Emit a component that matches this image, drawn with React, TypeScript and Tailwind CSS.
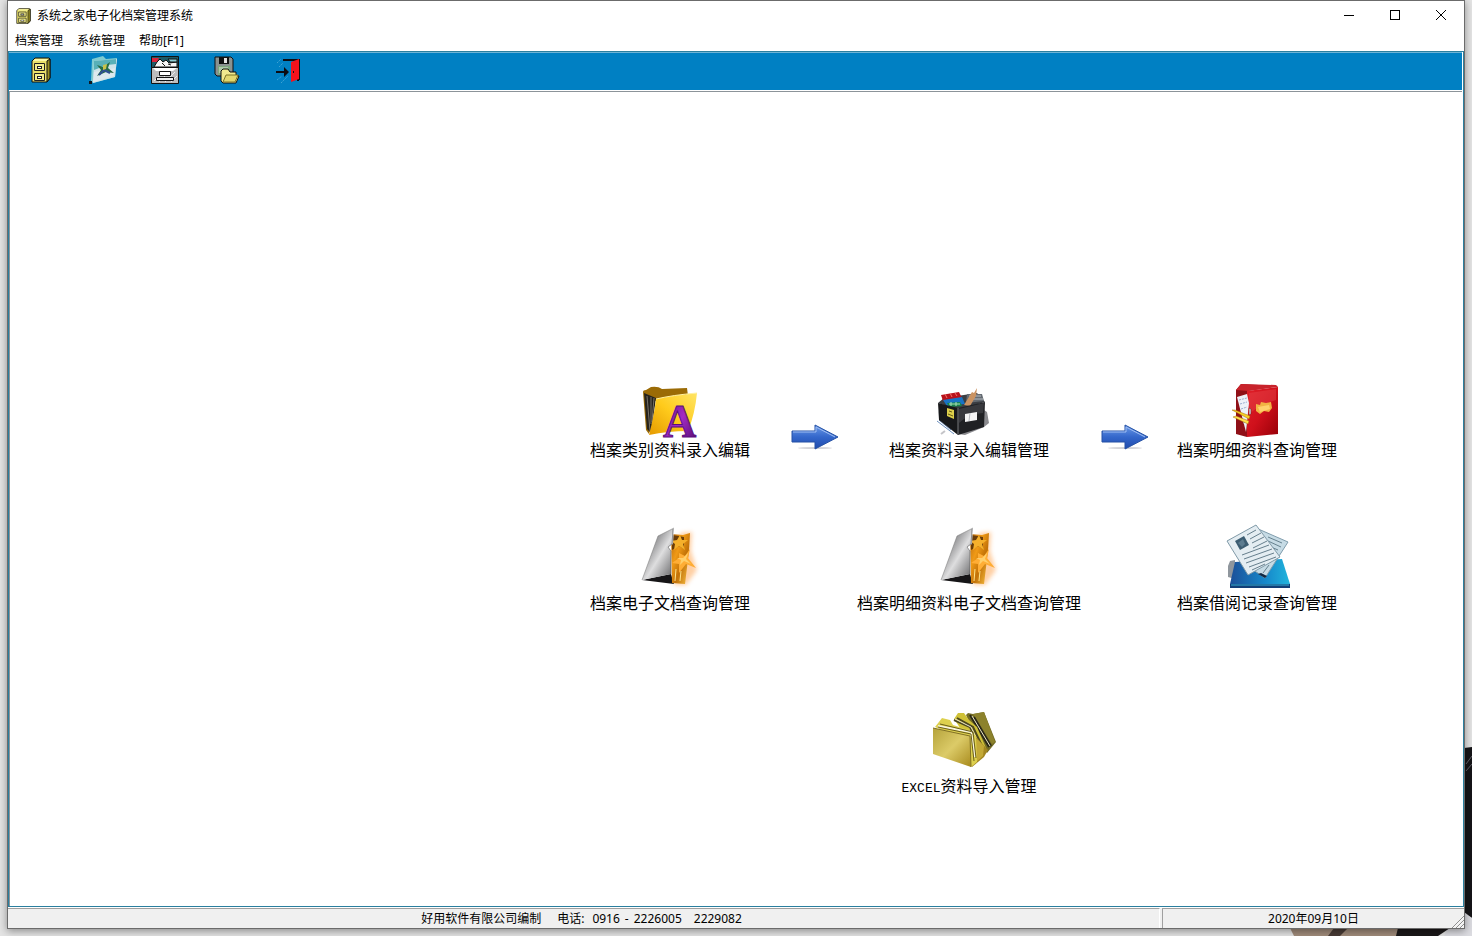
import React from "react";

const menus = ["档案管理", "系统管理", "帮助[F1]"];

const CabinetIcon = ({ className }: { className?: string }) => (
  <svg viewBox="0 0 20 26" preserveAspectRatio="none" className={className} aria-hidden="true">
    <path d="M1 4L4 1H18L19 2V21L16 25H1Z" fill="#e9e06a" stroke="#111" />
    <path d="M16 4L19 2V21L16 25Z" fill="#9a8f22" stroke="#111" />
    <path d="M2 4L4 2H17L15 4Z" fill="#fbf7a8" />
    <path d="M3.5 6.5H13.5V13.5H3.5ZM3.5 16.5H13.5V23.5H3.5Z" fill="#f4ee8a" stroke="#222" />
    <path d="M6 9H11V12H6ZM6 19H11V22H6Z" fill="#222" />
    <path d="M7 10H10V11H7ZM7 20H10V21H7Z" fill="#fff" />
  </svg>
);

const PictureIcon = () => (
  <svg viewBox="0 0 28 28" className="size-7" aria-hidden="true">
    <path d="M3 3L14 0L17 3L28 2L26 21L4 27L2 25Z" fill="#7fcbd0" />
    <path d="M5 5L28 3L26 21L4 27Z" fill="#cfe4ea" />
    <path d="M5 5L27 3V8L18 9L5 14Z" fill="#58b0b8" />
    <path d="M5 16L26 12L25 20L4 26Z" fill="#dfe9ee" />
    <path d="M8 9L14 11L21 6L19 12L25 17L17 16L8 20L12 14Z" fill="#276c45" />
    <path d="M10 19L15 14L21 17" stroke="#304f94" strokeWidth="2" fill="none" />
    <path d="M14 9L18 8L17 13L14 14Z" fill="#c9c24a" />
    <path d="M0 25H3V28H0Z" fill="#101820" />
  </svg>
);

const DrawerIcon = () => (
  <svg viewBox="0 0 28 28" className="size-7" aria-hidden="true">
    <path d="M0.5 0.5H27.5V12H0.5Z" fill="#1d5a66" stroke="#111" />
    <path d="M1 2H8L6 6H1Z" fill="#d8243c" />
    <path d="M3 11L6 6L9 3L12 6L15 4L18 7L26 6V11Z" fill="#f6f6f6" stroke="#111" />
    <path d="M17 3H26V6H19Z" fill="#8bcbd2" stroke="#111" />
    <path d="M11 7L14 10M17 8L20 9" stroke="#111" />
    <path d="M0.5 11.5H27.5V27.5H0.5Z" fill="#bdbdbd" stroke="#111" />
    <path d="M2 12H26L22 15H5Z" fill="#fff" />
    <path d="M3 25L13 15M8 26L18 16M14 26L24 16M20 26L26 20" stroke="#eee" />
    <path d="M8.500 15.500H19.500V19.500H8.500Z" fill="#fff" stroke="#111" />
    <path d="M5.500 21.500V24.500H22.500V21.500Z" fill="#eee" stroke="#111" />
  </svg>
);

const SaveIcon = () => (
  <svg viewBox="0 0 28 28" className="size-7" aria-hidden="true">
    <path d="M2 1H18L20 3V20H4L2 18Z" fill="#8a9290" stroke="#111" />
    <rect x="6" y="1" width="10" height="7" fill="#111" />
    <rect x="11" y="2" width="3" height="5" fill="#e6e6e6" />
    <rect x="5" y="10" width="12" height="9" fill="#7ea67d" />
    <path d="M6 12H15M6 14H13M6 16H10" stroke="#dcebd8" />
    <path d="M8 15L10 13H15L17 16H23V19L26 20L23 27H10L8 25Z" fill="#f0e98e" stroke="#111" />
    <path d="M10 26L13 19H25L22 26Z" fill="#e2d870" stroke="#7d7426" />
  </svg>
);

const ExitIcon = () => (
  <svg viewBox="0 0 28 28" className="size-7" aria-hidden="true">
    <path d="M2 7L6 3M4 11L8 7M2 24L7 20M6 27L13 20" stroke="#3fa3d4" strokeDasharray="2 1" />
    <path d="M8 3H24V25H22V5H8Z" fill="#0c0c12" />
    <path d="M16 6L24 3V23L16 26Z" fill="#f5121b" />
    <path d="M24 3V24L25 24V3Z" fill="#111" />
    <path d="M18 15H19V17H18Z" fill="#111" />
    <path d="M1 15H9V11L14 16L9 21V17H1Z" fill="#0c0c12" />
  </svg>
);

const tools = [
  { label: "档案类别", icon: <CabinetIcon className="h-[26px] w-5" /> },
  { label: "电子文档", icon: <PictureIcon /> },
  { label: "档案资料", icon: <DrawerIcon /> },
  { label: "数据备份", icon: <SaveIcon /> },
  { label: "退出系统", icon: <ExitIcon /> },
];

const FolderLetterIcon = () => (
  <svg viewBox="0 0 64 64" className="size-16 overflow-visible" aria-hidden="true">
    <defs>
      <linearGradient id="folderFront" x1="0" y1="1" x2="1" y2="0">
        <stop offset="0" stopColor="#e59a00" />
        <stop offset=".5" stopColor="#ffcb1c" />
        <stop offset="1" stopColor="#ffe566" />
      </linearGradient>
      <linearGradient id="letter" x1="0" y1="0" x2="1" y2="1">
        <stop offset="0" stopColor="#5c0d7c" />
        <stop offset=".5" stopColor="#a32bc4" />
        <stop offset="1" stopColor="#4b0868" />
      </linearGradient>
    </defs>
    <path d="M5 18Q5 16 8 16L13 13Q20 12 24 15L49 14L50 22L17 27L11 60L8 56Z" fill="#9b6b06" />
    <path d="M6 19L18 24L13 59L9 55Z" fill="#26231c" />
    <path d="M9 22L12 57M13 23L13 50M16 24L14 48" stroke="#777167" />
    <path d="M18 25Q35 21 59 19Q57 40 50 57Q30 57 11 61Q16 42 18 25Z" fill="url(#folderFront)" />
    <path d="M18 25Q35 21 59 19" stroke="#fff0a0" fill="none" />
    <text
      x="25"
      y="63"
      fontSize="46"
      fontWeight="700"
      fontFamily="Liberation Serif, serif"
      fill="url(#letter)"
      stroke="#5c0d7c"
    >
      A
    </text>
  </svg>
);

const FileBoxIcon = () => (
  <svg viewBox="0 0 64 64" className="size-16 overflow-visible" aria-hidden="true">
    <path d="M0 47L17 60M2 46L14 56" stroke="#6c8fbd" strokeWidth="1" />
    <path d="M4 60L8 57" stroke="#c4c4c8" strokeWidth="2" />
    <path d="M47 36L50 38L52 49L47 53L28 61L21 60Z" fill="#8b8b8f" />
    <path d="M1 29L7 24L40 19L48 28L21 36Z" fill="#3b3e43" />
    <path d="M30 20L45 20L47 27L29 29Z" fill="#656b72" />
    <path d="M32 22L44 22M33 25L46 25" stroke="#b7bdc1" />
    <path d="M4 21L22 18L25 24L6 27Z" fill="#b8121b" />
    <path d="M8 20L10 24M13 19L15 23M18 19L20 22" stroke="#f37067" />
    <path d="M6 26L25 23L28 30L10 32Z" fill="#1873c5" />
    <path d="M10 29L23 28L25 32L12 33Z" fill="#17834a" />
    <path d="M12 30H23M14 28V32M19 28V32" stroke="#a8dfba" />
    <path d="M35 18L37 19L40 14L39 22L33 32L27 31Z" fill="#ca9362" />
    <path d="M1 29L21 34V61L2 46Z" fill="#17181a" />
    <path d="M21 34L48 28L47 53L21 61Z" fill="#202124" />
    <path d="M22 35L47 29L46 39Q33 39 22 49Z" fill="#38393d" />
    <path d="M21 34V60" stroke="#76787b" />
    <path d="M10 34L17 36V45L10 42Z" fill="#ddcf4b" />
    <path d="M12 37L15 38M11 40L16 42" stroke="#655b16" />
    <path d="M28 40L40 38V46L28 48Z" fill="#f5f5f5" />
    <path d="M33 39L32 47" stroke="#b9bbc0" />
  </svg>
);

const RedCabinetIcon = () => (
  <svg viewBox="0 0 64 64" className="size-16 overflow-visible" aria-hidden="true">
    <defs>
      <linearGradient id="redDoor" x1="0" y1="0" x2="1" y2="1">
        <stop offset="0" stopColor="#e02029" />
        <stop offset=".5" stopColor="#cf101b" />
        <stop offset="1" stopColor="#970008" />
      </linearGradient>
    </defs>
    <path d="M11 16L16 10L53 12L22 17L22 63L11 60Z" fill="#8f1017" />
    <path d="M16 10L51 11L53 13L23 17L11 16Z" fill="#c8232b" />
    <path d="M22 17L53 13V60L22 63Z" fill="url(#redDoor)" />
    <path d="M24 19L51 15V26Q36 30 24 40Z" fill="#e84a50" opacity=".4" />
    <path d="M12 23L22 20L24 29L21 58Z" fill="#eef1f8" />
    <path d="M14 26L22 24M15 30L22 28M16 35L22 33M18 49L21 48" stroke="#9aaecf" strokeDasharray="2 1" />
    <path d="M7 36L10 36L25 42L24 45Z" fill="#f7cf24" stroke="#a66c0b" strokeWidth=".5" />
    <path d="M8 43L11 42L24 47L23 50Z" fill="#ffe04c" stroke="#a66c0b" strokeWidth=".5" />
    <path d="M24 34L26 35V40L24 41Z" fill="#d3d3d6" stroke="#6f1013" strokeWidth=".5" />
    <path d="M31 30L35 31L36 28L41 29L46 28L47 34L44 38L39 37L35 40L31 37Z" fill="#f2b243" />
    <path d="M33 33L44 31L45 35L35 38Z" fill="#ffd16c" />
  </svg>
);

const StarFolderIcon = () => (
  <svg viewBox="0 0 64 64" className="size-16 overflow-visible" aria-hidden="true">
    <defs>
      <linearGradient id="silver" x1="0" y1="0" x2="1" y2="1">
        <stop offset="0" stopColor="#555" />
        <stop offset=".3" stopColor="#8c8c8e" />
        <stop offset=".55" stopColor="#dededf" />
        <stop offset="1" stopColor="#58585a" />
      </linearGradient>
      <linearGradient id="gold" x1="0" y1="0" x2="1" y2="1">
        <stop offset="0" stopColor="#b5660c" />
        <stop offset=".35" stopColor="#f09a16" />
        <stop offset=".6" stopColor="#c27208" />
        <stop offset="1" stopColor="#ffc94a" />
      </linearGradient>
      <filter id="glow" x="-30%" y="-30%" width="160%" height="160%">
        <feGaussianBlur stdDeviation="2" />
      </filter>
    </defs>
    <path d="M42 6L54 5L53 24L59 43L48 58L36 58Z" fill="#ffb067" opacity=".6" filter="url(#glow)" />
    <path d="M4 53L33 47L36 57Z" fill="#161517" />
    <path d="M33 7L45 8L52 6L51 24L47 57L34 56Z" fill="url(#gold)" />
    <path d="M34 8L46 10L46 22L41 19L34 23Z" fill="#6a3c08" />
    <path d="M42 8L44 13L50 13L45 17L47 23L41 19L36 23L37 17L33 14L39 13Z" fill="#f5b02b" />
    <path d="M52 22L50 31L58 41L48 37L41 46L41 37L34 36L41 31L41 26L47 29Z" fill="#ffad35" />
    <path d="M50 26L48 32L53 37L46 34L42 38L43 33L39 31L45 31Z" fill="#ffcf6b" />
    <path d="M38 42L37 54M43 44L42 54" stroke="#ffe38a" strokeWidth="1" />
    <path d="M36 1L20 9L4 53L33 47L33 24L30 20L35 17Z" fill="url(#silver)" />
    <path d="M36 1L20 9L4 53" stroke="#777" strokeWidth=".5" fill="none" />
    <path d="M35 2L34 17L30 20L33 24V47" stroke="#444" strokeWidth=".5" fill="none" />
  </svg>
);

const PapersIcon = () => (
  <svg viewBox="0 0 64 64" className="size-16 overflow-visible" aria-hidden="true">
    <defs>
      <linearGradient id="blueTray" x1="0" y1="0" x2="1" y2="0">
        <stop offset="0" stopColor="#1b4f98" />
        <stop offset=".6" stopColor="#1689cb" />
        <stop offset="1" stopColor="#22b5dc" />
      </linearGradient>
    </defs>
    <path d="M3 39L5 34L10 33L10 52L3 50Z" fill="#8f969d" />
    <path d="M10 35L57 32L65 57H5Z" fill="url(#blueTray)" />
    <path d="M5 57H65V61H5Z" fill="#123f77" />
    <path d="M6 58H64" stroke="#35b2d8" />
    <path d="M31 1L63 15L40 51L21 38Z" fill="#c6dbe5" stroke="#7f9cac" />
    <path d="M43 10L57 16M43 14L56 20M46 20L53 23M45 36L49 30M38 46L44 38" stroke="#66818e" />
    <path d="M31 -2L2 14L23 48L55 30Z" fill="#e4edf2" stroke="#809aa8" />
    <path d="M10 14L19 9L24 18L15 23Z" fill="#3c5d72" />
    <path d="M13 16L18 12L20 17L17 20Z" fill="#5c7c90" />
    <path d="M22 8L31 3M25 12L36 6M27 16L39 10M28 21L42 14M17 28L44 18M19 32L47 22M21 36L49 26M24 40L51 30M27 43L40 37" stroke="#657e8c" />
    <path d="M36 46L42 49L40 51L33 47Z" fill="#122944" />
  </svg>
);

const FoldersIcon = () => (
  <svg viewBox="0 0 64 64" className="size-16 overflow-visible" aria-hidden="true">
    <defs>
      <linearGradient id="manila" x1="0" y1="0" x2="1" y2="1">
        <stop offset="0" stopColor="#b5a33b" />
        <stop offset=".5" stopColor="#dccb68" />
        <stop offset="1" stopColor="#a88a1c" />
      </linearGradient>
    </defs>
    <path d="M29 5L31 3L36 4L47 2L59 32L50 43L40 30Z" fill="#746d25" />
    <path d="M36 4L47 2L58 32L55 34Z" fill="#8c822c" />
    <path d="M33 5L52 37M37 7L54 36" stroke="#292717" strokeWidth="2" />
    <path d="M35 6L53 36" stroke="#e6e2c5" />
    <path d="M17 9L21 3L27 3L32 10L40 17L49 38L39 51L30 28Z" fill="#cfc137" />
    <path d="M17 10L33 17L41 34M20 8L36 17L46 38" stroke="#4c471d" strokeWidth="2" fill="none" />
    <path d="M18 9L34 17L44 38" stroke="#eee9cd" fill="none" />
    <path d="M35 23L41 29L51 40L47 47L35 57Z" fill="#a28620" />
    <path d="M38 27L47 36L46 46L36 55Z" fill="#c3a936" />
    <path d="M-2 17L5 8L13 10L16 15L32 20L39 26L40 52L34 57L28 30Z" fill="#ddd04e" />
    <path d="M1 16L34 22L38 47" stroke="#f7f4df" strokeWidth="2" fill="none" />
    <path d="M1 17L34 24L37 51M3 14L36 22L39 48" stroke="#6a5e1a" fill="none" />
    <path d="M-4 18L33 26L34 57L-4 44Z" fill="url(#manila)" />
    <path d="M-4 18L33 26L34 57" stroke="#827125" fill="none" />
  </svg>
);

const FlowArrow = () => (
  <div className="flex justify-center pt-12">
    <svg viewBox="0 0 48 28" className="h-7 w-12" aria-hidden="true">
      <defs>
        <linearGradient id="arrowBlue" x1="0" y1="0" x2="0" y2="1">
          <stop offset="0" stopColor="#6b9ae8" />
          <stop offset=".5" stopColor="#3467cb" />
          <stop offset="1" stopColor="#1f4aac" />
        </linearGradient>
      </defs>
      <ellipse cx="24" cy="26" rx="17" ry="1" fill="#d3d3d8" />
      <path d="M1 9H24V3L47 15L24 27V20H1Z" fill="url(#arrowBlue)" stroke="#2451a5" />
      <path d="M2 10H25V5L44 15" stroke="#9dbcf2" fill="none" />
    </svg>
  </div>
);

type LauncherProps = { icon: React.ReactNode; children: React.ReactNode };

const Launcher = ({ icon, children }: LauncherProps) => (
  <button type="button" className="flex flex-col items-center">
    {icon}
    <span className="whitespace-nowrap text-base leading-[22px]">{children}</span>
  </button>
);

const TitleBar = () => (
  <header className="flex h-[30px] items-center bg-white pl-2">
    <CabinetIcon className="h-4 w-[15px]" />
    <h1 className="flex-1 pl-[6px]">系统之家电子化档案管理系统</h1>
    <div className="flex h-7 self-start">
      <button type="button" aria-label="最小化" className="flex w-[46px] items-center justify-center">
        <svg viewBox="0 0 12 12" className="size-3" aria-hidden="true">
          <path d="M1 6.5H11" stroke="#000" />
        </svg>
      </button>
      <button type="button" aria-label="最大化" className="flex w-[46px] items-center justify-center">
        <svg viewBox="0 0 12 12" className="size-3" aria-hidden="true">
          <rect x="1.5" y="1.5" width="9" height="9" fill="none" stroke="#000" />
        </svg>
      </button>
      <button type="button" aria-label="关闭" className="flex w-[46px] items-center justify-center">
        <svg viewBox="0 0 12 12" className="size-3" aria-hidden="true">
          <path d="M1 1L11 11M11 1L1 11" stroke="#000" />
        </svg>
      </button>
    </div>
  </header>
);

const StatusBar = () => (
  <footer className="flex h-5 gap-[2px] bg-[#f0f0f0]">
    <div className="flex flex-1 items-center justify-center border-t border-r border-t-[#a0a0a0] border-r-white pr-1 whitespace-nowrap">
      <span>好用软件有限公司编制</span>
      <span className="ml-4">电话:</span>
      <span className="ml-2">0916</span>
      <span className="mx-[5px]">-</span>
      <span>2226005</span>
      <span className="ml-3">2229082</span>
    </div>
    <div className="relative flex w-[302px] items-center justify-center border-t border-l border-[#a0a0a0]">
      <span>2020年09月10日</span>
      <svg viewBox="0 0 12 12" className="absolute right-0 bottom-0 size-3" aria-hidden="true">
        <path d="M0 12L12 0M4 12L12 4M8 12L12 8" stroke="#8d8d8d" />
        <path d="M1 12L12 1M5 12L12 5M9 12L12 9" stroke="#fff" strokeWidth=".5" />
      </svg>
    </div>
  </footer>
);

const Wallpaper = () => (
  <svg viewBox="0 0 184 190" className="absolute right-0 bottom-0 h-[190px] w-[184px]" aria-hidden="true">
    <path d="M176 2L184 1V172L176 168Z" fill="#151417" />
    <path d="M178 18L184 10M178 25L184 18" stroke="#62616a" />
    <path d="M160 182L176 166L184 172V190H156Z" fill="#dcdce1" />
    <path d="M2 182H118V190H6Z" fill="#a18c7b" />
    <path d="M46 182H60L52 190H40Z" fill="#4a3c36" />
    <path d="M110 182H162L150 190H108Z" fill="#1b1819" />
  </svg>
);

const App = () => {
  return (
    <div className="relative flex min-h-screen flex-col overflow-hidden bg-[#e4e4e4] px-[7px] pb-[7px] font-['Noto_Sans','Noto_Sans_CJK_SC',sans-serif] text-xs leading-4 text-black">
      <Wallpaper />
      <div className="relative flex flex-1 flex-col border border-[#6b6b6b] bg-white shadow-[0_2px_8px_rgba(0,0,0,0.4)]">
        <TitleBar />

        <nav className="flex h-5 items-center gap-[14px] pl-[7px]">
          {menus.map((menu) => (
            <button key={menu} type="button">
              {menu}
            </button>
          ))}
        </nav>

        <div className="flex flex-1 flex-col border-x border-t border-[#2b7f9f]">
          <div
            role="toolbar"
            aria-label="工具栏"
            className="mr-px flex h-[38px] items-center border-t border-[#6fb4d6] bg-[#0080c3] pb-[3px] pl-px"
          >
            {tools.map((tool) => (
              <button key={tool.label} type="button" aria-label={tool.label} className="flex w-[62px] justify-center">
                {tool.icon}
              </button>
            ))}
          </div>

          <main className="mt-px mr-px flex-1 border-t border-l border-[#8c9499] bg-white pt-[282px] pr-[129px] font-['Noto_Sans_CJK_SC',sans-serif]">
            <div className="grid grid-cols-[182px_108px_200px_112px_152px] justify-end">
              <Launcher icon={<FolderLetterIcon />}>档案类别资料录入编辑</Launcher>
              <FlowArrow />
              <Launcher icon={<FileBoxIcon />}>档案资料录入编辑管理</Launcher>
              <FlowArrow />
              <Launcher icon={<RedCabinetIcon />}>档案明细资料查询管理</Launcher>
            </div>
            <div className="mt-[67px] grid grid-cols-[182px_108px_200px_112px_152px] justify-end">
              <Launcher icon={<StarFolderIcon />}>档案电子文档查询管理</Launcher>
              <span />
              <Launcher icon={<StarFolderIcon />}>档案明细资料电子文档查询管理</Launcher>
              <span />
              <Launcher icon={<PapersIcon />}>档案借阅记录查询管理</Launcher>
            </div>
            <div className="mt-[97px] grid grid-cols-[182px_108px_200px_112px_152px] justify-end">
              <span className="col-span-2" />
              <Launcher icon={<FoldersIcon />}>
                <span className="font-['Liberation_Mono',monospace] text-[13px]">EXCEL</span>
                资料导入管理
              </Launcher>
            </div>
          </main>
        </div>

        <div className="border-t border-[#2b7f9f] pt-px">
          <StatusBar />
        </div>
      </div>
    </div>
  );
};

export default App;
